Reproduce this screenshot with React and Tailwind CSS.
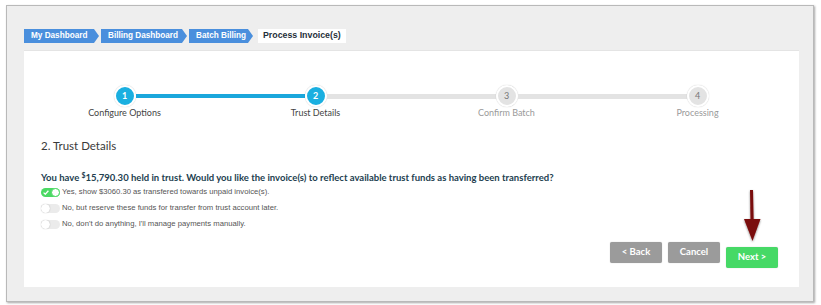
import React from 'react';

const crumbs = [
  { label: 'My Dashboard', w: 'w-[75px]' },
  { label: 'Billing Dashboard', w: 'w-[86px]' },
  { label: 'Batch Billing', w: 'w-[64px]' },
];

const steps = [
  { n: 1, label: 'Configure Options', done: true, left: 'none', right: 'blue' },
  { n: 2, label: 'Trust Details', done: true, left: 'blue', right: 'gray' },
  { n: 3, label: 'Confirm Batch', done: false, left: 'gray', right: 'gray' },
  { n: 4, label: 'Processing', done: false, left: 'gray', right: 'none' },
];

const lineClass = {
  none: 'bg-transparent h-[4px]',
  blue: 'bg-[#1aa7dc] h-[4px]',
  gray: 'bg-[#e3e3e3] h-[5px]',
};

const options = [
  { on: true, text: 'Yes, show $3060.30 as transfered towards unpaid invoice(s).' },
  { on: false, text: 'No, but reserve these funds for transfer from trust account later.' },
  { on: false, text: "No, don't do anything, I'll manage payments manually." },
];

const Toggle = ({ on }) =>
  on ? (
    <div className="w-[19px] h-[9px] rounded-full bg-[#4cd964] flex items-center justify-between pl-[2px]">
      <svg width="6" height="5" viewBox="0 0 6 5">
        <path d="M0.6 2.6 L2.3 4.2 L5.4 0.8" fill="none" stroke="#fff" strokeWidth="1.3" />
      </svg>
      <div className="w-[9px] h-[9px] rounded-full bg-white border border-[#4cd964]" />
    </div>
  ) : (
    <div className="w-[19px] h-[9px] rounded-full bg-[#ebebeb] flex items-center">
      <div className="w-[9px] h-[9px] rounded-full bg-white shadow-[0_0_1px_rgba(0,0,0,0.35)]" />
    </div>
  );

export default function App() {
  return (
    <div className="w-[821px] h-[305px] bg-white pl-[6px] pt-[5px] font-['Lato',sans-serif]">
      <div className="w-[808px] h-[297px] border border-[#b9b9b9] shadow-[1px_1px_2px_rgba(0,0,0,0.35)] bg-[#eeeeee] pl-[17px] pt-[23px]">
        {/* breadcrumb */}
        <div className="flex items-center gap-[2px] h-[14px] font-['Liberation_Sans',Arial,sans-serif] font-bold text-[8.2px]">
          {crumbs.map((c) => (
            <div
              key={c.label}
              className={`${c.w} h-[14px] bg-[#4a8fdd] text-white pl-[7px] flex items-center whitespace-nowrap [clip-path:polygon(0_0,calc(100%-5px)_0,100%_50%,calc(100%-5px)_100%,0_100%)]`}
            >
              {c.label}
            </div>
          ))}
          <div className="ml-[3px] w-[88px] h-[14px] bg-white text-[#1f2f3a] text-[8.8px] pl-[5px] flex items-center whitespace-nowrap">
            Process Invoice(s)
          </div>
        </div>

        {/* card */}
        <div className="mt-[7px] w-[775px] h-[237px] bg-white border-t border-[#e4e4e4] pt-[34px] flex flex-col">
          <div className="ml-[5px] w-[764px] grid grid-cols-4">
            {steps.map((s) => (
              <div key={s.n} className="flex flex-col items-center">
                <div className="w-full flex items-center">
                  <div className={`flex-1 ${lineClass[s.left]}`} />
                  <div
                    className={`w-[22px] h-[22px] rounded-full border-2 border-white shadow-[0_0_1px_rgba(0,0,0,0.25)] flex items-center justify-center text-[9px] ${
                      s.done ? 'bg-[#1aafe0] text-white font-bold' : 'bg-[#e3e3e3] text-[#777]'
                    }`}
                  >
                    {s.n}
                  </div>
                  <div className={`flex-1 ${lineClass[s.right]}`} />
                </div>
                <div className={`text-[9px] leading-[12px] ${s.done ? 'text-[#444]' : 'text-[#9a9a9a]'}`}>
                  {s.label}
                </div>
              </div>
            ))}
          </div>

          <div className="px-[17px]">
            <h2 className="mt-[19px] text-[11.5px] leading-[16px] text-[#3a3a3a]">2. Trust Details</h2>
            <p className="mt-[17px] text-[9.5px] leading-[13px] font-bold text-[#22404f] whitespace-nowrap">
              You have <sup className="text-[7px]">$</sup>15,790.30 held in trust. Would you like the invoice(s) to reflect available trust funds as having been transferred?
            </p>
            <div className="flex flex-col font-['Liberation_Sans',Arial,sans-serif] text-[7.7px] text-[#555]">
              {options.map((o) => (
                <div key={o.text} className="h-[16px] flex items-center gap-[2px]">
                  <Toggle on={o.on} />
                  <span>{o.text}</span>
                </div>
              ))}
            </div>
          </div>

          <div className="mt-[10px] pr-[21px] flex justify-end gap-[6px]">
            <button className="w-[52px] h-[21px] bg-[#9b9b9b] text-white text-[9.5px] font-bold rounded-[2px] shadow-[0_0_1px_rgba(0,0,0,0.3)]">
              &lt; Back
            </button>
            <button className="w-[52px] h-[21px] bg-[#9b9b9b] text-white text-[9.5px] font-bold rounded-[2px] shadow-[0_0_1px_rgba(0,0,0,0.3)]">
              Cancel
            </button>
            <div className="relative">
              <svg
                className="absolute left-[16px] bottom-[25px]"
                width="20"
                height="54"
                viewBox="0 0 20 54"
              >
                <defs>
                  <filter id="sh" x="-50%" y="-20%" width="200%" height="140%">
                    <feDropShadow dx="0" dy="1" stdDeviation="0.8" floodColor="#000" floodOpacity="0.45" />
                  </filter>
                </defs>
                <g filter="url(#sh)">
                  <path d="M8 1 L11 1 L11.6 30 L18.5 30 L10.5 52 L2 30 L8.5 30 Z" fill="#7a0a0a" />
                </g>
              </svg>
              <button className="w-[52px] h-[21px] bg-[#46d966] text-white text-[9.5px] font-bold rounded-[2px] shadow-[0_0_1px_rgba(0,0,0,0.3)]">
                Next &gt;
              </button>
            </div>
          </div>
        </div>
      </div>
    </div>
  );
}
